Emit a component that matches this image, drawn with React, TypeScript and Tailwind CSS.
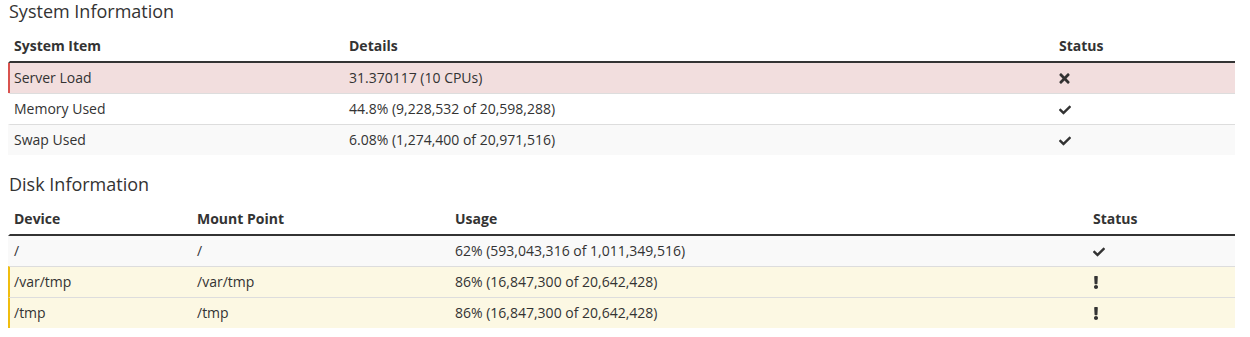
import { FaCheck, FaTimes, FaExclamation } from 'react-icons/fa'

type Tone = 'danger' | 'warning' | 'plain' | 'striped'

const toneClass: Record<Tone, string> = {
  danger: 'bg-[#f2dede] border-l-[#d9534f]',
  warning: 'bg-[#fcf8e3] border-l-[#f0bd0f]',
  plain: 'bg-white border-l-transparent',
  striped: 'bg-[#f9f9f9] border-l-transparent',
}

function StatusIcon({ kind }: { kind: 'ok' | 'bad' | 'warn' }) {
  if (kind === 'bad') return <FaTimes className="w-[11px] h-[15px] text-[#333]" />
  if (kind === 'warn') return <FaExclamation className="w-[12px] h-[13px] -ml-[3px] text-[#333]" />
  return <FaCheck className="w-[12px] h-[12px] mt-[1px] text-[#333]" />
}

const sysRows: { item: string; details: string; tone: Tone; status: 'ok' | 'bad' | 'warn' }[] = [
  { item: 'Server Load', details: '31.370117 (10 CPUs)', tone: 'danger', status: 'bad' },
  { item: 'Memory Used', details: '44.8% (9,228,532 of 20,598,288)', tone: 'plain', status: 'ok' },
  { item: 'Swap Used', details: '6.08% (1,274,400 of 20,971,516)', tone: 'striped', status: 'ok' },
]

const diskRows: { device: string; mount: string; usage: string; tone: Tone; status: 'ok' | 'bad' | 'warn' }[] = [
  { device: '/', mount: '/', usage: '62% (593,043,316 of 1,011,349,516)', tone: 'striped', status: 'ok' },
  { device: '/var/tmp', mount: '/var/tmp', usage: '86% (16,847,300 of 20,642,428)', tone: 'warning', status: 'warn' },
  { device: '/tmp', mount: '/tmp', usage: '86% (16,847,300 of 20,642,428)', tone: 'warning', status: 'warn' },
]

function Title({ children }: { children: string }) {
  return <h2 className="text-[18px] leading-[22px] font-normal text-[#333] mb-[11px] pl-px">{children}</h2>
}

export default function App() {
  return (
    <div className="bg-white min-h-[337px] px-2 text-[#333] text-[14px]" style={{ fontFamily: '"Open Sans", "Liberation Sans", sans-serif' }}>
      <section className="w-[1227px]">
        <Title>System Information</Title>
        <div className="grid grid-cols-[335px_710px_1fr] h-[30px] pt-[3px] border-l-2 border-l-transparent border-b-2 border-b-[#333] font-bold leading-5">
          <div className="px-1">System Item</div>
          <div className="px-1">Details</div>
          <div className="px-1">Status</div>
        </div>
        {sysRows.map((r, i) => (
          <div
            key={r.item}
            className={`grid grid-cols-[335px_710px_1fr] h-[30px] py-[5px] leading-5 border-l-2 ${toneClass[r.tone]} ${i > 0 ? 'border-t border-t-[#ddd] h-[31px]' : ''}`}
          >
            <div className="px-1">{r.item}</div>
            <div className="px-1">{r.details}</div>
            <div className="px-1 flex items-center">
              <StatusIcon kind={r.status} />
            </div>
          </div>
        ))}
      </section>

      <section className="w-[1227px] mt-[18px]">
        <Title>Disk Information</Title>
        <div className="grid grid-cols-[183px_258px_638px_1fr] h-[30px] pt-[3px] border-l-2 border-l-transparent border-b-2 border-b-[#333] font-bold leading-5">
          <div className="px-1">Device</div>
          <div className="px-1">Mount Point</div>
          <div className="px-1">Usage</div>
          <div className="px-1">Status</div>
        </div>
        {diskRows.map((r, i) => (
          <div
            key={r.device}
            className={`grid grid-cols-[183px_258px_638px_1fr] h-[30px] py-[5px] leading-5 border-l-2 ${toneClass[r.tone]} ${i > 0 ? 'border-t border-t-[#ddd] h-[31px]' : ''}`}
          >
            <div className="px-1">{r.device}</div>
            <div className="px-1">{r.mount}</div>
            <div className="px-1">{r.usage}</div>
            <div className="px-1 flex items-center">
              <StatusIcon kind={r.status} />
            </div>
          </div>
        ))}
      </section>
    </div>
  )
}
